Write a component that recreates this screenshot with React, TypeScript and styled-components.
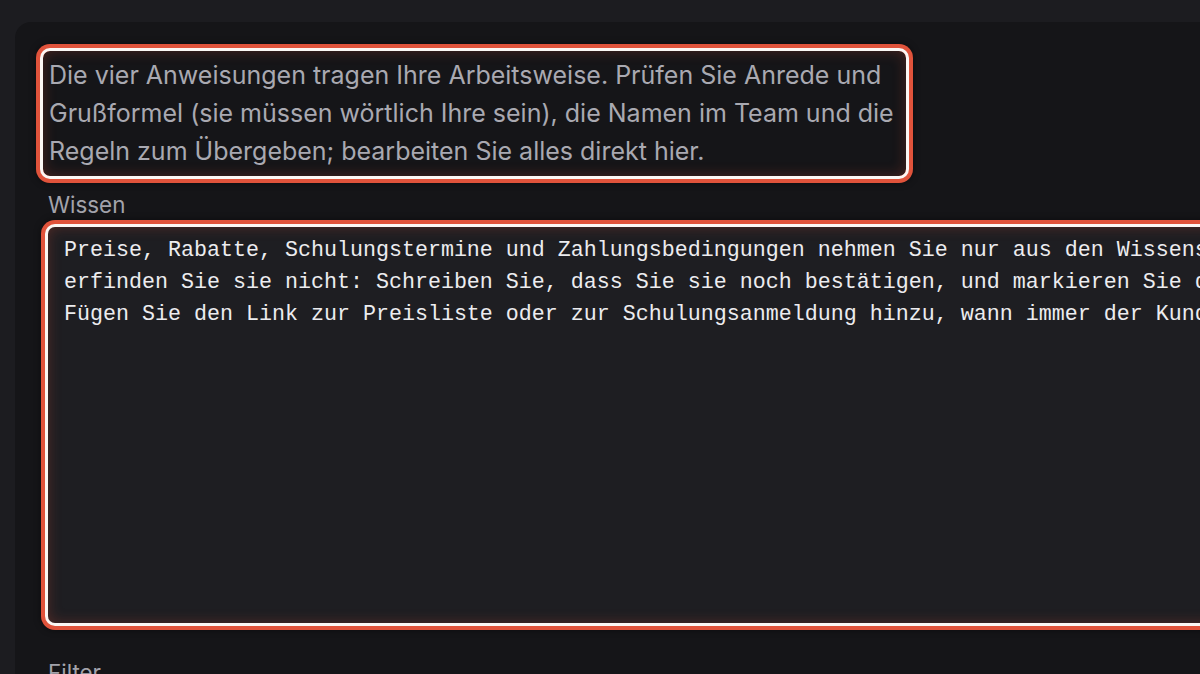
import styled, { createGlobalStyle } from "styled-components";

const GlobalStyle = createGlobalStyle`
  html, body {
    margin: 0;
    padding: 0;
    background: #1c1c20;
    overflow: hidden;
  }

  body {
    font-family: Inter, "Noto Sans", sans-serif;
  }
`;

const StyledPage = styled.div`
  width: 100vw;
  height: 674px;
  overflow: hidden;
  padding: 22px 0 0 15px;
  box-sizing: border-box;
`;

const StyledPanel = styled.section`
  width: 1400px;
  min-height: 700px;
  background: #151518;
  border-radius: 16px;
  padding: 29px 0 0 33px;
  box-sizing: border-box;
  display: flex;
  flex-direction: column;
`;

const highlight = `
  box-shadow:
    0 0 0 3px #fbf7f4,
    0 0 0 7px #e0533b,
    0 0 6px 8px rgba(0, 0, 0, 0.35),
    inset 0 0 14px rgba(214, 74, 52, 0.28);
`;

const StyledIntro = styled.p<{ $highlighted?: boolean }>`
  margin: 0 0 0 -5px;
  width: 863px;
  box-sizing: border-box;
  padding: 5px 6px 6px;
  border-radius: 7px;
  font-size: 25px;
  line-height: 38px;
  color: #a9a9b1;
  ${(p) => (p.$highlighted ? highlight : "")}
`;

const StyledField = styled.div`
  display: flex;
  flex-direction: column;
  gap: 8px;
  margin-top: 15px;
`;

const StyledLabel = styled.label`
  font-size: 22.4px;
  line-height: 28px;
  color: #a3a3ab;
`;

const StyledTextArea = styled.textarea<{ $highlighted?: boolean }>`
  width: 1340px;
  height: 396px;
  box-sizing: border-box;
  resize: none;
  border: none;
  outline: none;
  border-radius: 7px;
  padding: 8px 16px;
  background: #1e1e22;
  color: #ececef;
  font-family: "Liberation Mono", "DejaVu Sans Mono", monospace;
  font-size: 21.67px;
  line-height: 32px;
  white-space: pre;
  overflow: hidden;
  ${(p) => (p.$highlighted ? highlight : "")}
`;

const StyledNextField = styled(StyledField)`
  margin-top: 36px;
`;

const knowledge = [
  "Preise, Rabatte, Schulungstermine und Zahlungsbedingungen nehmen Sie nur aus den Wissensquellen;",
  "erfinden Sie sie nicht: Schreiben Sie, dass Sie sie noch bestätigen, und markieren Sie diese Stelle.",
  "Fügen Sie den Link zur Preisliste oder zur Schulungsanmeldung hinzu, wann immer der Kunde danach fragt.",
].join("\n");

export default function App() {
  return (
    <>
      <GlobalStyle />
      <StyledPage>
        <StyledPanel>
          <StyledIntro $highlighted>
            Die vier Anweisungen tragen Ihre Arbeitsweise. Prüfen Sie Anrede und
            Grußformel (sie müssen wörtlich Ihre sein), die Namen im Team und die
            Regeln zum Übergeben; bearbeiten Sie alles direkt hier.
          </StyledIntro>
          <StyledField>
            <StyledLabel htmlFor="wissen">Wissen</StyledLabel>
            <StyledTextArea
              id="wissen"
              $highlighted
              readOnly
              wrap="off"
              value={knowledge}
            />
          </StyledField>
          <StyledNextField>
            <StyledLabel>Filter</StyledLabel>
          </StyledNextField>
        </StyledPanel>
      </StyledPage>
    </>
  );
}
